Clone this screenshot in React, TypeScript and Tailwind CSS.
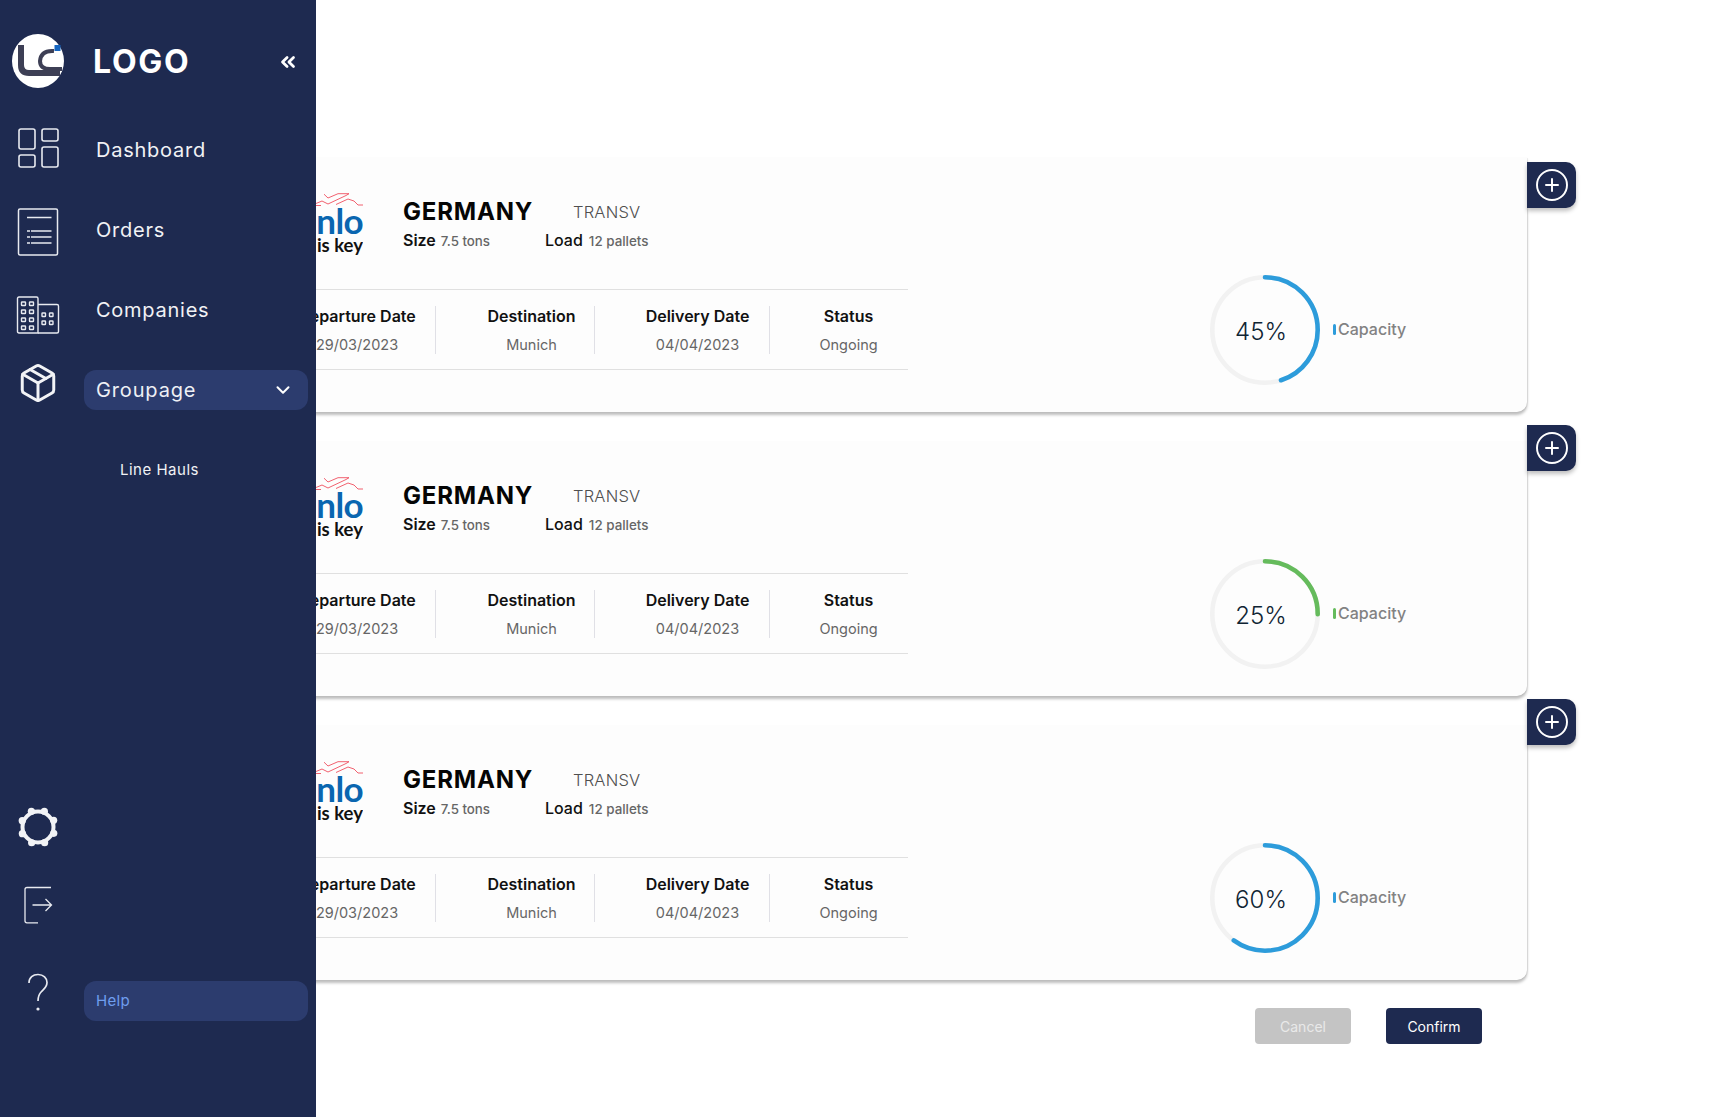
import { ChevronDown, ChevronsLeft, CirclePlus, Package } from "lucide-react";

const NAVY = "#1e2a50";

function LogoMark() {
  return (
    <svg width="54" height="54" viewBox="11 34 54 54" fill="none">
      <ellipse cx="38" cy="61" rx="26" ry="27" fill="#fff" />
      <path d="M21 45V65Q21 73 29 73H60" stroke="#3d3f55" strokeWidth="6" />
      <path d="M54 51Q41 50 40 61Q40 69 50 69H62" stroke="#3d3f55" strokeWidth="4" />
      <rect x="54.5" y="45" width="6" height="6" fill="#1565c0" />
    </svg>
  );
}

function DashboardIcon() {
  return (
    <svg width="42" height="42" viewBox="0 0 42 42" fill="none" stroke="#e8eaf0" strokeWidth="1.6">
      <rect x="2" y="2" width="16" height="20" rx="2" />
      <rect x="25" y="2" width="16" height="12" rx="2" />
      <rect x="2" y="28" width="16" height="12" rx="2" />
      <rect x="25" y="20" width="16" height="20" rx="2" />
    </svg>
  );
}

function OrdersIcon() {
  return (
    <svg width="42" height="48" viewBox="0 0 42 48" fill="none" stroke="#e8eaf0" strokeWidth="1.5">
      <rect x="1.5" y="1" width="39" height="46" rx="1.5" />
      <path d="M10 9.5H34.5M14 23H34.5M14 29H34.5M14 35H34.5M10 23H13M10 29H13M10 35H13" />
    </svg>
  );
}

function CompaniesIcon() {
  return (
    <svg width="44" height="38" viewBox="0 0 44 38" fill="none" stroke="#e8eaf0" strokeWidth="1.4">
      <path d="M22 37H3Q1.5 37 1.5 35.5V2.5Q1.5 1 3 1H20.5Q22 1 22 2.5V37Z" />
      <path d="M22 8.5H41Q42.5 8.5 42.5 10V35.5Q42.5 37 41 37H22" />
      {[6, 14, 22, 30].map((y) => (
        <g key={y}>
          <rect x="5.5" y={y} width="4" height="3.5" rx="0.6" />
          <rect x="13.5" y={y} width="4" height="3.5" rx="0.6" />
        </g>
      ))}
      {[17, 25].map((y) => (
        <g key={y}>
          <rect x="26" y={y} width="3.5" height="3.5" rx="0.6" />
          <rect x="33.5" y={y} width="3.5" height="3.5" rx="0.6" />
        </g>
      ))}
    </svg>
  );
}

function GearIcon() {
  const bumps = [0, 45, 90, 135, 180, 225, 270, 315];
  return (
    <svg width="42" height="42" viewBox="0 0 42 42" fill="none">
      <circle cx="21" cy="21" r="15.5" stroke="#f2f3f6" strokeWidth="4" />
      {bumps.map((a) => (
        <circle
          key={a}
          cx={21 + 17 * Math.sin(((a + 22) * Math.PI) / 180)}
          cy={21 - 17 * Math.cos(((a + 22) * Math.PI) / 180)}
          r="3.6"
          fill="#f2f3f6"
        />
      ))}
    </svg>
  );
}

function LogoutIcon() {
  return (
    <svg width="30" height="38" viewBox="0 0 30 38" fill="none" stroke="#e8eaf0" strokeWidth="1.3">
      <path d="M28 1.5H4Q2 1.5 2 3.5V35Q2 36.8 4 36.8H15" />
      <path d="M9.5 19H28M22.5 13L28.5 19L22.5 25" />
    </svg>
  );
}

function HelpIcon() {
  return (
    <svg width="24" height="40" viewBox="0 0 24 40" fill="none" stroke="#e8eaf0" strokeWidth="1.7">
      <path d="M3 10C3 4.5 7 1.5 12 1.5C17.5 1.5 21 5 21 9.5C21 14 18 16 15.5 18.5C13.5 20.5 12 22.5 12 28" />
      <circle cx="12" cy="36" r="1.6" fill="#e8eaf0" stroke="none" />
    </svg>
  );
}

function NavRow({ icon, label, iconClass }: { icon: React.ReactNode; label: string; iconClass: string }) {
  return (
    <div className="flex h-14 items-center">
      <div className={`flex w-[76px] shrink-0 justify-center ${iconClass}`}>{icon}</div>
      <span className="ml-5 font-['Inter',sans-serif] text-[20px] tracking-[0.75px] text-[#f1f2f5]">{label}</span>
    </div>
  );
}

function Sidebar() {
  return (
    <aside className="flex h-screen w-[316px] shrink-0 flex-col pb-[88px]" style={{ backgroundColor: NAVY }}>
      <div className="flex h-[122px] items-center">
        <div className="flex w-[76px] shrink-0 justify-center">
          <LogoMark />
        </div>
        <span className="ml-[17px] mt-[2px] font-['Inter',sans-serif] text-[32px] font-bold tracking-[1.7px] text-white">LOGO</span>
        <ChevronsLeft className="ml-[87px] mt-px text-white" size={22} strokeWidth={3} />
      </div>
      <div className="flex flex-col gap-6">
        <NavRow icon={<DashboardIcon />} label="Dashboard" iconClass="mb-1" />
        <NavRow icon={<OrdersIcon />} label="Orders" iconClass="mt-1" />
        <NavRow icon={<CompaniesIcon />} label="Companies" iconClass="mt-[9px]" />
        <div className="flex h-14 items-center">
          <div className="mb-[14px] flex w-[76px] shrink-0 justify-center">
            <Package size={42} strokeWidth={1.7} className="text-[#f2f3f6]" />
          </div>
          <div className="ml-2 flex h-10 w-[224px] items-center justify-between rounded-xl bg-[#2c3c6e] pl-3 pr-[14px]">
            <span className="font-['Inter',sans-serif] text-[20px] tracking-[0.85px] text-[#eef0f5]">Groupage</span>
            <ChevronDown size={22} strokeWidth={2.2} className="text-white" />
          </div>
        </div>
        <div className="flex h-14 items-center pl-[120px]">
          <span className="font-['Inter',sans-serif] text-[15px] tracking-[0.5px] text-[#f1f2f5]">Line Hauls</span>
        </div>
      </div>
      <div className="mt-auto flex flex-col">
        <div className="flex h-14 w-[76px] items-center justify-center">
          <GearIcon />
        </div>
        <div className="mt-[22px] flex h-14 w-[76px] items-center justify-center">
          <LogoutIcon />
        </div>
        <div className="mt-10 flex h-14 items-center">
          <div className="mb-[16px] flex w-[76px] shrink-0 justify-center">
            <HelpIcon />
          </div>
          <div className="ml-2 flex h-10 w-[224px] items-center rounded-xl bg-[#2c3c6e] pl-3">
            <span className="font-['Inter',sans-serif] text-[15px] tracking-[0.3px] text-[#6f9eee]">Help</span>
          </div>
        </div>
      </div>
    </aside>
  );
}

function BrandLogo() {
  return (
    <div className="flex h-[70px] w-[84px] shrink-0 flex-col items-end overflow-hidden font-['Lato',sans-serif] font-bold">
      <svg width="47" height="13" viewBox="0 0 47 13" fill="none" stroke="#ef4f5f" strokeWidth="0.9" className="shrink-0">
        <path d="M0 10.5L6 8L12 11L30 2.5L33 0.7L22 0.7L12 5L8 1.2M20 11.5L32 6L38 8L42 12H47M0 12.5H5" />
      </svg>
      <span className="mt-[1px] text-[35px] leading-[26px] tracking-[-0.6px] text-[#0a66b0]">nlo</span>
      <span className="mt-[2px] text-[18.5px] leading-[20px] text-[#111]">is key</span>
    </div>
  );
}

const columns = [
  { w: "w-[157px]", head: "Departure Date", value: "29/03/2023", cls: "border-r border-[#e0e0e6]" },
  { w: "w-[159px]", head: "Destination", value: "Munich", cls: "border-r border-[#e0e0e6] pl-[33px]" },
  { w: "w-[175px]", head: "Delivery Date", value: "04/04/2023", cls: "border-r border-[#e0e0e6] pl-[31px]" },
  { w: "w-[138px]", head: "Status", value: "Ongoing", cls: "pl-[19px]" },
];

function Ring({ pct, color }: { pct: number; color: string }) {
  const r = 52.7;
  const c = 2 * Math.PI * r;
  return (
    <div className="relative h-[110px] w-[110px] shrink-0">
      <svg width="110" height="110" viewBox="0 0 110 110" fill="none" className="-rotate-90">
        <circle cx="55" cy="55" r={r} stroke="#f2f2f2" strokeWidth="4.6" />
        <circle
          cx="55"
          cy="55"
          r={r}
          stroke={color}
          strokeWidth="4.6"
          strokeLinecap="round"
          strokeDasharray={`${(c * pct) / 100} ${c}`}
        />
      </svg>
      <span className="absolute inset-0 flex items-center justify-center pr-2 pt-[3px] font-['Inter',sans-serif] text-[24px] font-light text-[#0f2433]">
        {pct}%
      </span>
    </div>
  );
}

function Card({ pct, color, btnTop }: { pct: number; color: string; btnTop: string }) {
  return (
    <div className="relative -ml-[37px] flex h-[254px] rounded-br-[10px] bg-[#fdfdfd] shadow-[0_3px_3px_rgba(0,0,0,0.26),1px_0_1px_rgba(0,0,0,0.08)]">
      <div className="w-[629px] shrink-0 font-['Inter',sans-serif]">
        <div className="flex h-[132px] border-b border-[#e0e0e0] pt-[35px]">
          <BrandLogo />
          <div className="ml-10">
            <div className="flex items-center">
              <span className="w-[170px] text-[24px] font-bold leading-[38px] tracking-[0.8px] text-[#050505]">GERMANY</span>
              <span className="text-[16.5px] font-light tracking-[0.2px] text-[#4f4f4f]">TRANSV</span>
            </div>
            <div className="-mt-[3px] flex items-baseline">
              <div className="flex w-[142px] items-baseline">
                <span className="text-[16px] font-semibold text-[#111]">Size</span>
                <span className="ml-[5px] text-[13.3px] font-medium text-[#666]">7.5 tons</span>
              </div>
              <span className="text-[16px] font-medium text-[#111]">Load</span>
              <span className="ml-[6px] text-[13.4px] font-medium text-[#666]">12 pallets</span>
            </div>
          </div>
        </div>
        <div className="flex h-[80px] items-center border-b border-[#e0e0e0]">
          {columns.map((col) => (
            <div key={col.head} className={`${col.w} ${col.cls} flex h-[48px] flex-col items-center justify-between text-center`}>
              <span className="whitespace-nowrap text-[16px] font-semibold leading-5 text-[#111]">{col.head}</span>
              <span className="text-[14.5px] leading-[18px] text-[#666]">{col.value}</span>
            </div>
          ))}
        </div>
      </div>
      <div className="ml-[302px] mt-[117px] flex h-[110px] items-center">
        <Ring pct={pct} color={color} />
        <div className="mb-[2px] ml-[13px] h-[11px] w-[3px] rounded-sm" style={{ backgroundColor: color }} />
        <span className="mb-[2px] ml-[2px] font-['Inter',sans-serif] text-[16px] font-medium text-[#828282]">Capacity</span>
      </div>
      <button
        className={`absolute left-full flex h-[46px] w-[49px] items-center justify-center rounded-r-[10px] text-white shadow-[0_3px_4px_rgba(0,0,0,0.25)] ${btnTop}`}
        style={{ backgroundColor: NAVY }}
      >
        <CirclePlus size={36} strokeWidth={1.3} />
      </button>
    </div>
  );
}

export default function App() {
  return (
    <div className="flex h-screen overflow-hidden bg-white">
      <Sidebar />
      <main className="min-w-0 flex-1 overflow-hidden pr-[201px] pt-[158px]">
        <div className="flex flex-col gap-[30px]">
          <Card pct={45} color="#2d9cdb" btnTop="top-[4px]" />
          <Card pct={25} color="#65bb5c" btnTop="-top-[17px]" />
          <Card pct={60} color="#2d9cdb" btnTop="-top-[27px]" />
        </div>
        <div className="mt-[28px] flex justify-end gap-[35px] pr-[45px] font-['Inter',sans-serif] text-[14px]">
          <button className="h-9 w-24 rounded bg-[#c4c4c4] text-[#e9e9e9]">Cancel</button>
          <button className="h-9 w-24 rounded text-white" style={{ backgroundColor: NAVY }}>Confirm</button>
        </div>
      </main>
    </div>
  );
}
